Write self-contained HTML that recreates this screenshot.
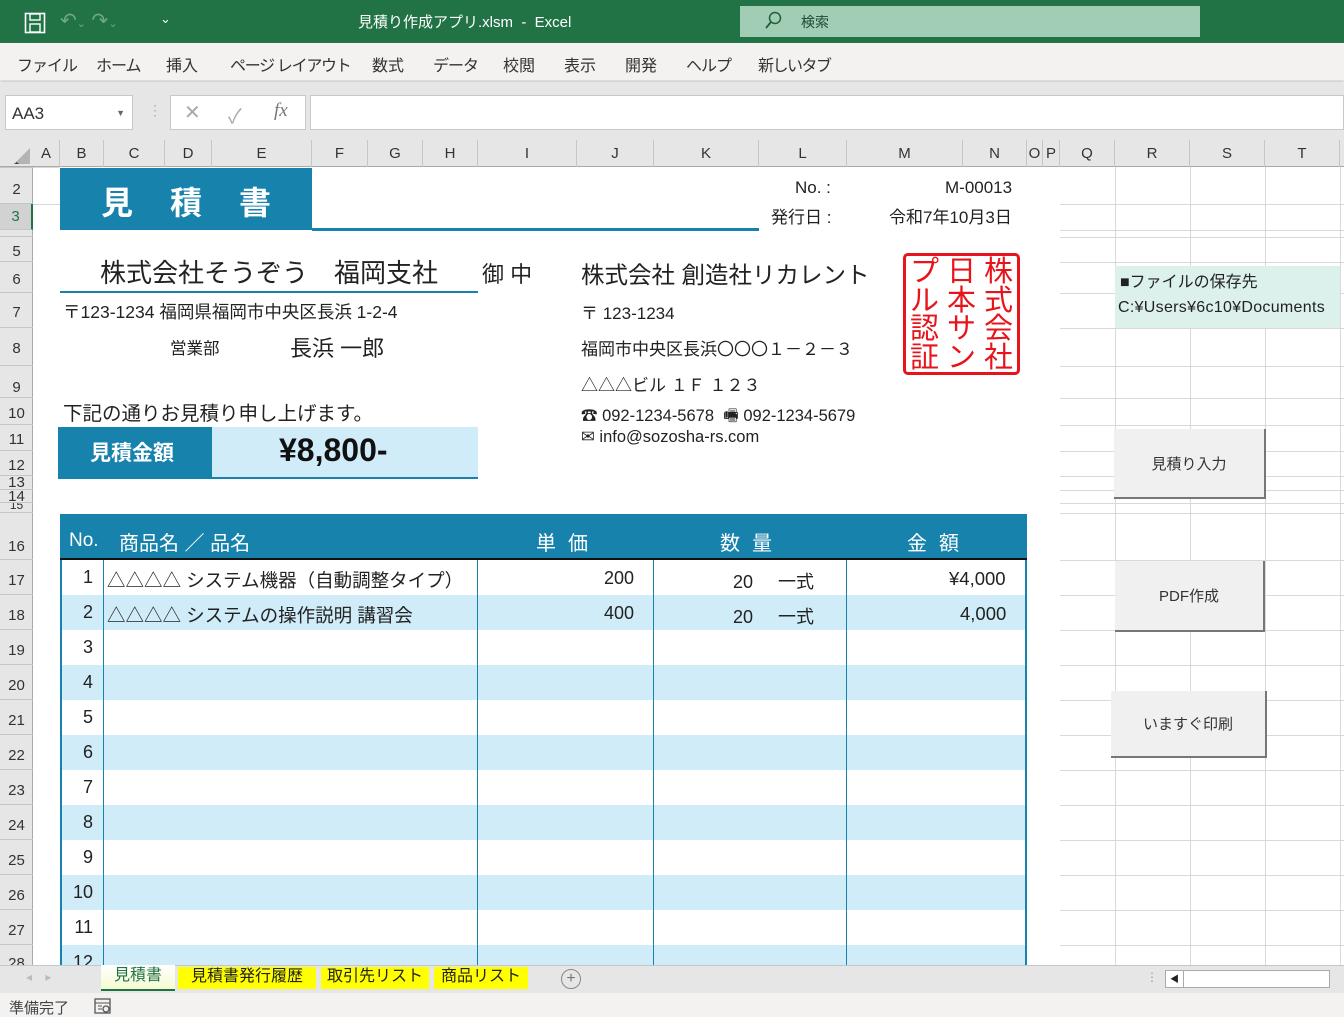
<!DOCTYPE html>
<html><head><meta charset="utf-8"><style>
*{margin:0;padding:0;box-sizing:border-box}
body{width:1344px;height:1017px;overflow:hidden;position:relative;background:#fff;font-family:"Liberation Sans","Noto Sans CJK JP",sans-serif;color:#222}
.a{position:absolute;white-space:nowrap}
.ch{position:absolute;top:140px;height:27px;border-right:1px solid #c6c6c6;font-size:15px;text-align:center;line-height:28px;color:#333}
.rh{position:absolute;left:0;width:33px;border-bottom:1px solid #c6c6c6;font-size:15px;text-align:center;color:#333;overflow:hidden;display:flex;align-items:flex-end;justify-content:center}
.gh{position:absolute;left:1060px;width:284px;height:1px;background:#d9d9d9}
.gv{position:absolute;top:167px;width:1px;height:798px;background:#d9d9d9}
.tr{position:absolute;left:60px;width:967px;height:35px;font-size:18px}
.btn{position:absolute;background:#f0f0f0;border-right:2px solid #777;border-bottom:2px solid #777;font-size:15px;color:#333;display:flex;align-items:center;justify-content:center}
.st{position:absolute;top:258px;width:37px;font-size:29px;line-height:28.5px;color:#e8141b;text-align:center;white-space:normal}
</style></head><body>
<!-- title bar -->
<div class="a" style="left:0;top:0;width:1344px;height:43px;background:#217346"></div>
<svg class="a" style="left:24px;top:12px" width="22" height="22" viewBox="0 0 22 22"><rect x="1.5" y="1.5" width="19" height="19" fill="none" stroke="#fff" stroke-width="1.6"/><rect x="6" y="2" width="10" height="6" fill="none" stroke="#fff" stroke-width="1.4"/><rect x="6" y="12" width="10" height="8" fill="none" stroke="#fff" stroke-width="1.4"/></svg>
<div class="a" style="left:60px;top:8px;font-size:20px;color:#6fa787">↶<span style="font-size:11px">⌄</span> ↷<span style="font-size:11px">⌄</span></div>
<div class="a" style="left:160px;top:11px;font-size:13px;color:#fff">⌄</div>
<div class="a" style="left:358px;top:11px;font-size:15px;color:#fff">見積り作成アプリ.xlsm &nbsp;- &nbsp;Excel</div>
<div class="a" style="left:740px;top:6px;width:460px;height:31px;background:#a0cdb4"></div>
<svg class="a" style="left:764px;top:11px" width="18" height="20" viewBox="0 0 18 20"><circle cx="11" cy="7" r="5.5" fill="none" stroke="#1f5f3c" stroke-width="1.5"/><path d="M7 11 L2 17" stroke="#1f5f3c" stroke-width="1.8"/></svg>
<div class="a" style="left:801px;top:12px;font-size:14px;color:#1d4a30">検索</div>
<!-- ribbon tabs -->
<div class="a" style="left:0;top:43px;width:1344px;height:38px;background:#f3f2f1;border-bottom:1px solid #ddd;box-shadow:0 2px 3px #ccc"></div>
<div class="a" style="left:17px;top:52px;font-size:16px;color:#333;letter-spacing:-1px">ファイル</div>
<div class="a" style="left:96px;top:52px;font-size:16px;color:#333;letter-spacing:-1px">ホーム</div>
<div class="a" style="left:166px;top:52px;font-size:16px;color:#333">挿入</div>
<div class="a" style="left:230px;top:52px;font-size:16px;color:#333;letter-spacing:-1.3px">ページ レイアウト</div>
<div class="a" style="left:372px;top:52px;font-size:16px;color:#333">数式</div>
<div class="a" style="left:433px;top:52px;font-size:16px;color:#333;letter-spacing:-1px">データ</div>
<div class="a" style="left:503px;top:52px;font-size:16px;color:#333">校閲</div>
<div class="a" style="left:564px;top:52px;font-size:16px;color:#333">表示</div>
<div class="a" style="left:625px;top:52px;font-size:16px;color:#333">開発</div>
<div class="a" style="left:686px;top:52px;font-size:16px;color:#333;letter-spacing:-1px">ヘルプ</div>
<div class="a" style="left:758px;top:52px;font-size:16px;color:#333;letter-spacing:-1.5px">新しいタブ</div>
<!-- formula bar -->
<div class="a" style="left:0;top:82px;width:1344px;height:58px;background:#e6e6e6"></div>
<div class="a" style="left:5px;top:95px;width:128px;height:35px;background:#fff;border:1px solid #c8c8c8;font-size:17px;line-height:35px;padding-left:6px;color:#333">AA3<span style="position:absolute;right:7px;font-size:9px;color:#666">▼</span></div>
<div class="a" style="left:148px;top:102px;font-size:14px;color:#aaa">⋮</div>
<div class="a" style="left:170px;top:95px;width:136px;height:35px;background:#fff;border:1px solid #c8c8c8"></div>
<div class="a" style="left:184px;top:100px;font-size:20px;color:#aaa">✕</div>
<div class="a" style="left:228px;top:100px;font-size:20px;color:#aaa">✓</div>
<div class="a" style="left:274px;top:100px;font-size:19px;color:#777;font-style:italic;font-family:'Liberation Serif',serif">fx</div>
<div class="a" style="left:310px;top:95px;width:1034px;height:35px;background:#fff;border:1px solid #c8c8c8"></div>
<!-- column headers -->
<div class="a" style="left:0;top:140px;width:1344px;height:27px;background:#e6e6e6;border-bottom:1px solid #a9a9a9"></div>
<svg class="a" style="left:10px;top:146px" width="22" height="20"><path d="M20 2 L20 18 L4 18 Z" fill="#b4b4b4"/></svg>
<div class="ch" style="left:33px;width:27px">A</div>
<div class="ch" style="left:60px;width:44px">B</div>
<div class="ch" style="left:104px;width:61px">C</div>
<div class="ch" style="left:165px;width:47px">D</div>
<div class="ch" style="left:212px;width:100px">E</div>
<div class="ch" style="left:312px;width:56px">F</div>
<div class="ch" style="left:368px;width:55px">G</div>
<div class="ch" style="left:423px;width:55px">H</div>
<div class="ch" style="left:478px;width:99px">I</div>
<div class="ch" style="left:577px;width:77px">J</div>
<div class="ch" style="left:654px;width:105px">K</div>
<div class="ch" style="left:759px;width:88px">L</div>
<div class="ch" style="left:847px;width:116px">M</div>
<div class="ch" style="left:963px;width:64px">N</div>
<div class="ch" style="left:1027px;width:16px">O</div>
<div class="ch" style="left:1043px;width:17px">P</div>
<div class="ch" style="left:1060px;width:55px">Q</div>
<div class="ch" style="left:1115px;width:75px">R</div>
<div class="ch" style="left:1190px;width:75px">S</div>
<div class="ch" style="left:1265px;width:75px">T</div>
<!-- row headers -->
<div class="a" style="left:0;top:167px;width:33px;height:798px;background:#e6e6e6;border-right:1px solid #a9a9a9"></div>
<div class="rh" style="top:162px;height:6px;font-size:10px">1</div>
<div class="rh" style="top:168px;height:36px;padding-bottom:5px">2</div>
<div class="rh" style="top:204px;height:26px;padding-bottom:4px;background:#d2d2d2;color:#217346;border-right:2px solid #217346">3</div>
<div class="rh" style="top:230px;height:7px"></div>
<div class="rh" style="top:237px;height:25px;padding-bottom:1px">5</div>
<div class="rh" style="top:262px;height:31px;padding-bottom:4px">6</div>
<div class="rh" style="top:293px;height:35px;padding-bottom:6px">7</div>
<div class="rh" style="top:328px;height:38px;padding-bottom:8px">8</div>
<div class="rh" style="top:366px;height:32px;padding-bottom:1px">9</div>
<div class="rh" style="top:398px;height:27px;padding-bottom:2px">10</div>
<div class="rh" style="top:425px;height:26px;padding-bottom:2px">11</div>
<div class="rh" style="top:451px;height:25px;padding-bottom:1px">12</div>
<div class="rh" style="top:476px;height:14px;line-height:14px;align-items:center">13</div>
<div class="rh" style="top:490px;height:13px;align-items:center">14</div>
<div class="rh" style="top:503px;height:10px;align-items:flex-end;font-size:12px">15</div>
<div class="rh" style="top:513px;height:47px;padding-bottom:4px">16</div>
<div class="rh" style="top:560px;height:35px;padding-bottom:5px">17</div>
<div class="rh" style="top:595px;height:35px;padding-bottom:5px">18</div>
<div class="rh" style="top:630px;height:35px;padding-bottom:5px">19</div>
<div class="rh" style="top:665px;height:35px;padding-bottom:5px">20</div>
<div class="rh" style="top:700px;height:35px;padding-bottom:5px">21</div>
<div class="rh" style="top:735px;height:35px;padding-bottom:5px">22</div>
<div class="rh" style="top:770px;height:35px;padding-bottom:5px">23</div>
<div class="rh" style="top:805px;height:35px;padding-bottom:5px">24</div>
<div class="rh" style="top:840px;height:35px;padding-bottom:5px">25</div>
<div class="rh" style="top:875px;height:35px;padding-bottom:5px">26</div>
<div class="rh" style="top:910px;height:35px;padding-bottom:5px">27</div>
<div class="rh" style="top:945px;height:20px;align-items:flex-start;padding-top:10px;border:none">28</div>
<!-- grid right -->
<div class="gh" style="top:204px"></div><div class="gh" style="top:230px"></div><div class="gh" style="top:237px"></div><div class="gh" style="top:262px"></div><div class="gh" style="top:293px"></div><div class="gh" style="top:328px"></div><div class="gh" style="top:366px"></div><div class="gh" style="top:398px"></div><div class="gh" style="top:425px"></div><div class="gh" style="top:451px"></div><div class="gh" style="top:476px"></div><div class="gh" style="top:490px"></div><div class="gh" style="top:503px"></div><div class="gh" style="top:513px"></div><div class="gh" style="top:560px"></div><div class="gh" style="top:595px"></div><div class="gh" style="top:630px"></div><div class="gh" style="top:665px"></div><div class="gh" style="top:700px"></div><div class="gh" style="top:735px"></div><div class="gh" style="top:770px"></div><div class="gh" style="top:805px"></div><div class="gh" style="top:840px"></div><div class="gh" style="top:875px"></div><div class="gh" style="top:910px"></div><div class="gh" style="top:945px"></div>
<div class="gv" style="left:1115px"></div><div class="gv" style="left:1190px"></div><div class="gv" style="left:1265px"></div><div class="gv" style="left:1340px"></div>
<div class="a" style="left:33px;top:167px;width:27px;height:1px;background:#d9d9d9"></div>
<div class="a" style="left:33px;top:204px;width:27px;height:1px;background:#d9d9d9"></div>
<!-- title -->
<div class="a" style="left:60px;top:168px;width:252px;height:62px;background:#1782ac"></div>
<div class="a" style="left:312px;top:228px;width:447px;height:3px;background:#1782ac"></div>
<div class="a" style="left:101px;top:178px;font-size:32px;font-weight:bold;color:#fff;letter-spacing:37px">見積書</div>
<div class="a" style="left:795px;top:178px;font-size:17px">No. :</div>
<div class="a" style="left:945px;top:178px;font-size:17px">M-00013</div>
<div class="a" style="left:771px;top:203px;font-size:17px">発行日 :</div>
<div class="a" style="left:889px;top:203px;font-size:17px">令和7年10月3日</div>
<!-- customer -->
<div class="a" style="left:100px;top:253px;font-size:26px">株式会社そうぞう　福岡支社</div>
<div class="a" style="left:60px;top:291px;width:418px;height:2px;background:#1782ac"></div>
<div class="a" style="left:482px;top:257px;font-size:22px">御 中</div>
<div class="a" style="left:63px;top:299px;font-size:17.5px">〒123-1234 福岡県福岡市中央区長浜 1-2-4</div>
<div class="a" style="left:170px;top:335px;font-size:16.5px">営業部</div>
<div class="a" style="left:290px;top:331px;font-size:22px">長浜 一郎</div>
<div class="a" style="left:63px;top:397px;font-size:19.5px">下記の通りお見積り申し上げます。</div>
<div class="a" style="left:58px;top:427px;width:154px;height:50px;background:#1782ac"></div>
<div class="a" style="left:212px;top:427px;width:266px;height:50px;background:#d0ecf8"></div>
<div class="a" style="left:58px;top:477px;width:420px;height:2px;background:#1782ac"></div>
<div class="a" style="left:90px;top:437px;font-size:21px;font-weight:bold;color:#fff">見積金額</div>
<div class="a" style="left:279px;top:432px;font-size:32px;font-weight:bold;color:#111">¥8,800-</div>
<!-- company -->
<div class="a" style="left:581px;top:256px;font-size:23.5px">株式会社 創造社リカレント</div>
<div class="a" style="left:581px;top:299px;font-size:17px">〒 123-1234</div>
<div class="a" style="left:581px;top:335px;font-size:17px">福岡市中央区長浜〇〇〇１－２－３</div>
<div class="a" style="left:581px;top:371px;font-size:17px">△△△ビル １Ｆ １２３</div>
<div class="a" style="left:581px;top:402px;font-size:16.5px">☎ 092-1234-5678 &nbsp;🖷 092-1234-5679</div>
<div class="a" style="left:581px;top:427px;font-size:16.5px">✉ info@sozosha-rs.com</div>
<!-- stamp -->
<div class="a" style="left:903px;top:253px;width:117px;height:122px;border:3px solid #e8141b;border-radius:5px"></div>
<div class="st" style="left:980px">株<br>式<br>会<br>社</div>
<div class="st" style="left:943px">日<br>本<br>サ<br>ン</div>
<div class="st" style="left:906px">プ<br>ル<br>認<br>証</div>
<!-- file box -->
<div class="a" style="left:1115px;top:266px;width:225px;height:62px;background:#dcf1ec"></div>
<div class="a" style="left:1120px;top:268px;font-size:16px">■ファイルの保存先</div>
<div class="a" style="left:1118px;top:299px;font-size:16px;letter-spacing:0.3px">C:¥Users¥6c10¥Documents</div>
<!-- buttons -->
<div class="btn" style="left:1114px;top:429px;width:152px;height:70px">見積り入力</div>
<div class="btn" style="left:1115px;top:561px;width:150px;height:71px">PDF作成</div>
<div class="btn" style="left:1111px;top:691px;width:156px;height:67px">いますぐ印刷</div>
<!-- table -->
<div class="a" style="left:60px;top:514px;width:967px;height:46px;background:#1782ac;border-bottom:2px solid #111"></div>
<div class="a" style="left:69px;top:530px;font-size:19px;color:#fff">No.</div>
<div class="a" style="left:119px;top:527px;font-size:20px;color:#fff">商品名 ／ 品名</div>
<div class="a" style="left:536px;top:527px;font-size:20px;color:#fff;letter-spacing:12px">単価</div>
<div class="a" style="left:720px;top:527px;font-size:20px;color:#fff;letter-spacing:12px">数量</div>
<div class="a" style="left:907px;top:527px;font-size:20px;color:#fff;letter-spacing:12px">金額</div>
<div class="tr" style="top:595px;background:#d0ecf8"></div>
<div class="tr" style="top:665px;background:#d0ecf8"></div>
<div class="tr" style="top:735px;background:#d0ecf8"></div>
<div class="tr" style="top:805px;background:#d0ecf8"></div>
<div class="tr" style="top:875px;background:#d0ecf8"></div>
<div class="tr" style="top:945px;height:20px;background:#d0ecf8"></div>
<div class="a" style="left:60px;top:560px;width:2px;height:405px;background:#1782ac"></div>
<div class="a" style="left:103px;top:560px;width:1px;height:405px;background:#1782ac"></div>
<div class="a" style="left:477px;top:560px;width:1px;height:405px;background:#1782ac"></div>
<div class="a" style="left:653px;top:560px;width:1px;height:405px;background:#1782ac"></div>
<div class="a" style="left:846px;top:560px;width:1px;height:405px;background:#1782ac"></div>
<div class="a" style="left:1025px;top:560px;width:2px;height:405px;background:#1782ac"></div>
<div class="a" style="left:60px;top:560px;width:33px;font-size:18px;text-align:right;line-height:35px">1<br>2<br>3<br>4<br>5<br>6<br>7<br>8<br>9<br>10<br>11<br>12</div>
<div class="a" style="left:107px;top:567px;font-size:18.5px">△△△△ システム機器（自動調整タイプ）</div>
<div class="a" style="left:107px;top:602px;font-size:18.5px">△△△△ システムの操作説明 講習会</div>
<div class="a" style="left:604px;top:568px;font-size:18px">200</div>
<div class="a" style="left:604px;top:603px;font-size:18px">400</div>
<div class="a" style="left:733px;top:568px;font-size:18px">20 &nbsp;&nbsp;&nbsp;&nbsp;一式</div>
<div class="a" style="left:733px;top:603px;font-size:18px">20 &nbsp;&nbsp;&nbsp;&nbsp;一式</div>
<div class="a" style="left:949px;top:568px;font-size:18.5px">¥4,000</div>
<div class="a" style="left:960px;top:603px;font-size:18.5px">4,000</div>
<!-- sheet tabs -->
<div class="a" style="left:0;top:965px;width:1344px;height:28px;background:#e6e6e6;border-top:1px solid #c6c6c6"></div>
<div class="a" style="left:26px;top:970px;font-size:12px;color:#bbb">◂ &nbsp;&nbsp;&nbsp;▸</div>
<div class="a" style="left:101px;top:965px;width:74px;height:26px;background:linear-gradient(#fff,#f5fbd0);border-bottom:2px solid #217346;font-size:16px;color:#217346;text-align:center;line-height:22px">見積書</div>
<div class="a" style="left:178px;top:967px;width:138px;height:22px;background:#ff0;font-size:16px;text-align:center;line-height:20px">見積書発行履歴</div>
<div class="a" style="left:321px;top:967px;width:108px;height:22px;background:#ff0;font-size:16px;text-align:center;line-height:20px">取引先リスト</div>
<div class="a" style="left:434px;top:967px;width:94px;height:22px;background:#ff0;font-size:16px;text-align:center;line-height:20px">商品リスト</div>
<div class="a" style="left:561px;top:969px;width:20px;height:20px;border:1px solid #888;border-radius:50%;font-size:16px;line-height:17px;text-align:center;color:#777">+</div>
<div class="a" style="left:1146px;top:970px;font-size:12px;color:#999">⋮</div>
<div class="a" style="left:1165px;top:970px;width:165px;height:18px;background:#fff;border:1px solid #aaa"></div>
<div class="a" style="left:1166px;top:971px;width:18px;height:16px;border-right:1px solid #aaa;font-size:9px;line-height:16px;text-align:center">◀</div>
<!-- status -->
<div class="a" style="left:0;top:993px;width:1344px;height:24px;background:#f3f2f1"></div>
<div class="a" style="left:9px;top:997px;font-size:15px;color:#444">準備完了</div>
<svg class="a" style="left:94px;top:998px" width="18" height="17"><rect x="1" y="1" width="15" height="14" fill="none" stroke="#555" stroke-width="1.3"/><path d="M1 5 H16 M4 8 H8 M4 11 H8" stroke="#555"/><circle cx="12" cy="11" r="3" fill="none" stroke="#555" stroke-width="1.3"/></svg>
</body></html>
